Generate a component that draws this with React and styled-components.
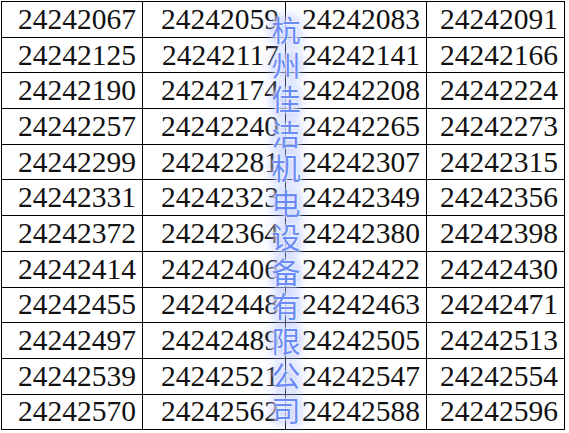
import React from "react";
import styled, { createGlobalStyle } from "styled-components";

const Global = createGlobalStyle`
  html, body {
    margin: 0;
    padding: 0;
    background: #ffffff;
    overflow: hidden;
  }
`;

const Page = styled.div`
  position: relative;
  width: 569px;
  height: 433px;
  padding: 1px 0 0 1px;
  box-sizing: border-box;
`;

const Table = styled.table`
  border-collapse: collapse;
  table-layout: fixed;
  font-family: "Liberation Serif", "DejaVu Serif", serif;
  font-size: 29.5px;
  color: #111;
`;

const Cell = styled.td`
  width: ${(p) => p.$w}px;
  height: 35.7px;
  padding: 0 6px 0 0;
  box-sizing: border-box;
  border: 1px solid #000;
  text-align: right;
  line-height: 33px;
  white-space: nowrap;
`;

const Stamp = styled.div`
  position: absolute;
  left: 271px;
  top: 12px;
  width: 30px;
  display: flex;
  flex-direction: column;
  align-items: center;
  font-family: "Noto Sans CJK SC", sans-serif;
  font-size: 29px;
  line-height: 34.5px;
  color: #6a8bf6;
  text-shadow: 0 0 2px #ffffff, 0 0 4px #ffffff, 0 0 7px #c9d4ff,
    0 0 11px #8ea5ff, 0 0 16px #a9bbff;
`;

const rows = [
  ["24242067", "24242059", "24242083", "24242091"],
  ["24242125", "24242117", "24242141", "24242166"],
  ["24242190", "24242174", "24242208", "24242224"],
  ["24242257", "24242240", "24242265", "24242273"],
  ["24242299", "24242281", "24242307", "24242315"],
  ["24242331", "24242323", "24242349", "24242356"],
  ["24242372", "24242364", "24242380", "24242398"],
  ["24242414", "24242406", "24242422", "24242430"],
  ["24242455", "24242448", "24242463", "24242471"],
  ["24242497", "24242489", "24242505", "24242513"],
  ["24242539", "24242521", "24242547", "24242554"],
  ["24242570", "24242562", "24242588", "24242596"],
];

const widths = [141, 143, 141, 138];

export default function App() {
  return (
    <Page>
      <Global />
      <Table>
        <tbody>
          {rows.map((r, i) => (
            <tr key={i}>
              {r.map((n, j) => (
                <Cell key={j} $w={widths[j]}>
                  {n}
                </Cell>
              ))}
            </tr>
          ))}
        </tbody>
      </Table>
      <Stamp>
        {"杭州佳洁机电设备有限公司".split("").map((c, i) => (
          <span key={i}>{c}</span>
        ))}
      </Stamp>
    </Page>
  );
}
